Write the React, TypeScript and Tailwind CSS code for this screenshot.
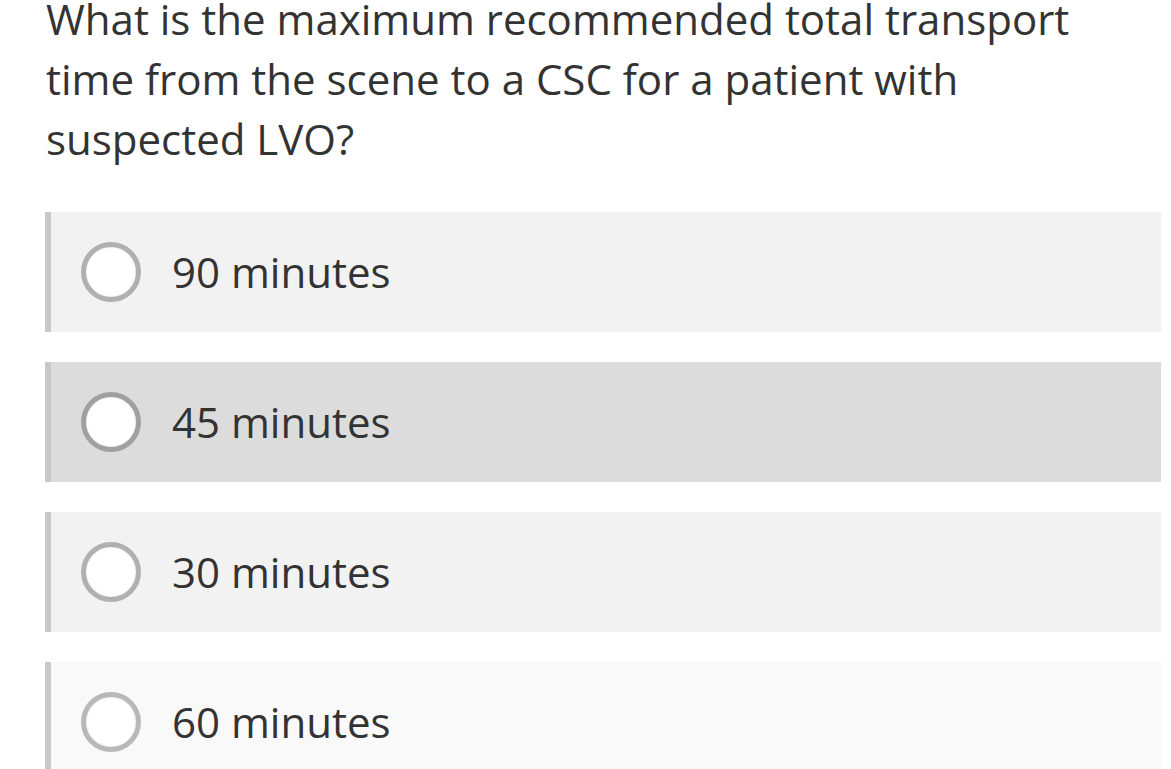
import React from 'react';

const options = [
  { label: '90 minutes', bg: 'bg-[#f2f2f2]', ring: 'border-[#b0b0b0]' },
  { label: '45 minutes', bg: 'bg-[#dcdcdc]', ring: 'border-[#a0a0a0]' },
  { label: '30 minutes', bg: 'bg-[#f2f2f2]', ring: 'border-[#b0b0b0]' },
  { label: '60 minutes', bg: 'bg-[#f9f9f9]', ring: 'border-[#b8b8b8]' },
];

const App = () => {
  return (
    <div className="min-h-screen bg-white text-[#333333] font-['Open_Sans',sans-serif] overflow-hidden">
      <h1 className="pl-[46px] pr-[40px] text-[42px] leading-[60px] font-normal -mt-[11px]">
        What is the maximum recommended total transport time from the scene to a CSC for a patient with suspected LVO?
      </h1>
      <div className="mt-[43px] ml-[45px] mr-[10px] flex flex-col gap-[30px]">
        {options.map((opt) => (
          <label
            key={opt.label}
            className={`flex items-center h-[120px] border-l-[6px] border-[#c8c8c8] ${opt.bg} cursor-pointer`}
          >
            <span
              className={`ml-[30px] w-[60px] h-[60px] shrink-0 rounded-full bg-white border-[5px] ${opt.ring} shadow-[inset_0_0_2px_rgba(0,0,0,0.15)]`}
            ></span>
            <span className="ml-[31px] text-[42px] leading-none">{opt.label}</span>
          </label>
        ))}
      </div>
    </div>
  );
};

export default App;
